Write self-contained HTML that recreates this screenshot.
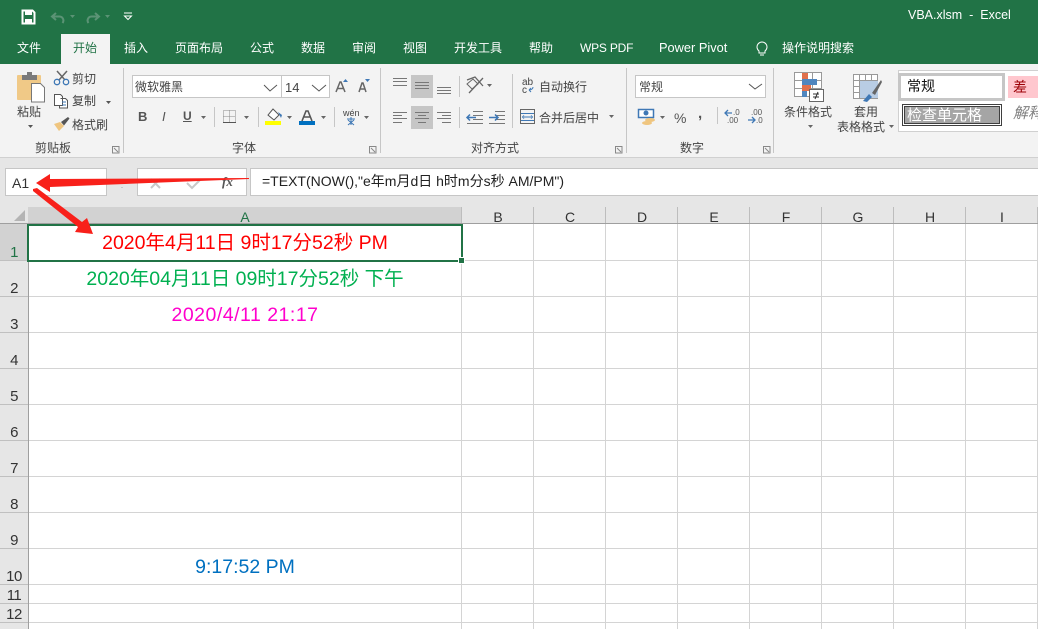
<!DOCTYPE html>
<html><head><meta charset="utf-8"><style>
html,body{margin:0;padding:0}
html{width:1038px;height:629px;overflow:hidden}
body{width:1038px;height:629px;overflow:hidden;position:relative;background:#fff;font-family:"Liberation Sans","Noto Sans CJK SC",sans-serif;font-size:12px;color:#333}
.a{position:absolute;white-space:nowrap;line-height:1}
.b{position:absolute}
svg{position:absolute;overflow:visible}
.t{color:#fff;font-size:12px;top:42px}
.c{font-size:12px;color:#444}
.r{left:0;width:28px;text-align:center;font-size:15px;letter-spacing:-.5px;color:#333}
.h{top:210px;font-size:14px;color:#333;text-align:center;width:72px}
.cell{left:29px;width:432px;text-align:center;font-size:19.5px}
</style></head><body>
<div class="b" style="left:0;top:0;width:1038px;height:64px;background:#217346"></div>
<div class="b" style="left:61px;top:34px;width:49px;height:30px;background:#f3f3f3"></div>
<svg style="left:0;top:0" width="200" height="34">
<path d="M22.500 10.500h10l2 2v11h-12z" fill="none" stroke="#fff" stroke-width="2"/><rect x="25" y="10" width="7" height="5" fill="#fff"/><rect x="25" y="19" width="7" height="5" fill="#fff"/>
<path d="M56 13l-4 3.500 4 3.500M52.500 16.500h7a4 4 0 0 1 3 6.500" fill="none" stroke="#5b9375" stroke-width="2"/><path d="M70 15h5l-2.500 3z" fill="#5b9375"/>
<path d="M95 13l4 3.500-4 3.500M98.500 16.500h-7a4 4 0 0 0-3 6.500" fill="none" stroke="#5b9375" stroke-width="2"/><path d="M105 15h5l-2.500 3z" fill="#5b9375"/>
<path d="M124 13h8" stroke="#fff"/><path d="M124.500 16h7l-3.500 3.500z" fill="none" stroke="#fff"/>
</svg>
<div class="a" style="left:908px;top:9px;color:#fff;font-size:12.500px">VBA.xlsm &nbsp;-&nbsp; Excel</div>
<div class="a t" style="left:17px">文件</div>
<div class="a t" style="left:73px;color:#217346">开始</div>
<div class="a t" style="left:124px">插入</div>
<div class="a t" style="left:175px">页面布局</div>
<div class="a t" style="left:250px">公式</div>
<div class="a t" style="left:301px">数据</div>
<div class="a t" style="left:352px">审阅</div>
<div class="a t" style="left:403px">视图</div>
<div class="a t" style="left:454px">开发工具</div>
<div class="a t" style="left:529px">帮助</div>
<div class="a t" style="left:580px;letter-spacing:-.2px">WPS PDF</div>
<div class="a t" style="left:659px;font-size:12.800px">Power Pivot</div>
<svg style="left:754px;top:40px" width="16" height="18"><path d="M5 11a5 5 0 1 1 6 0v2H5z" fill="none" stroke="#fff"/><path d="M6 15h4" stroke="#fff"/></svg>
<div class="a t" style="left:782px">操作说明搜索</div>

<div class="b" style="left:0;top:64px;width:1038px;height:93px;background:#f3f3f3;border-bottom:1px solid #d0d0d0"></div>
<div class="b" style="left:0;top:158px;width:1038px;height:49px;background:#e6e6e6"></div>
<div class="b" style="left:123px;top:68px;width:1px;height:85px;background:#c6c6c6"></div>
<div class="b" style="left:380px;top:68px;width:1px;height:85px;background:#c6c6c6"></div>
<div class="b" style="left:626px;top:68px;width:1px;height:85px;background:#c6c6c6"></div>
<div class="b" style="left:773px;top:68px;width:1px;height:85px;background:#c6c6c6"></div>

<!-- clipboard -->
<svg style="left:0;top:0" width="124" height="160">
<rect x="17" y="75" width="24" height="25" fill="#f0c987" rx="1"/><rect x="22" y="75" width="15" height="5" fill="#7a7a7a"/><rect x="27" y="72" width="5" height="4" fill="#7a7a7a"/>
<path d="M31.500 83.500h9l4 4v14.500h-13z" fill="#fff" stroke="#777"/>
<path d="M57 71l8 9M67 71l-8 9" stroke="#666" stroke-width="1.500"/><circle cx="57" cy="82" r="2.700" fill="none" stroke="#3f78b5" stroke-width="1.300"/><circle cx="66" cy="82" r="2.700" fill="none" stroke="#3f78b5" stroke-width="1.300"/>
<path d="M54.500 94.500h6l2 2v9h-8zM60.500 98.500h5l2 2v7.500h-8v-3" fill="#fff" stroke="#555"/><path d="M62 102h4M62 105h4" stroke="#3f78b5"/>
<path d="M54 124l6-2 4 4-5 5z" fill="#efc57f"/><path d="M61 122l7-5 1.500 1.500-5.500 7z" fill="#555"/>
<path d="M28 125h5l-2.500 3z" fill="#555"/><path d="M106 101h5l-2.500 3z" fill="#555"/>
<path d="M112.500 146.500h6.500v6.500h-6.500zM114 148l4 4" fill="none" stroke="#888"/>
</svg>
<div class="a c" style="left:17px;top:106px">粘贴</div>
<div class="a c" style="left:72px;top:73px">剪切</div>
<div class="a c" style="left:72px;top:95px">复制</div>
<div class="a c" style="left:72px;top:119px">格式刷</div>
<div class="a c" style="left:35px;top:142px">剪贴板</div>

<!-- font -->
<div class="b" style="left:132px;top:75px;width:148px;height:21px;background:#fff;border:1px solid #c6c6c6"></div>
<div class="b" style="left:281px;top:75px;width:47px;height:21px;background:#fff;border:1px solid #c6c6c6"></div>
<div class="a" style="left:135px;top:81px;font-size:12px;color:#444">微软雅黑</div>
<div class="a" style="left:285px;top:81px;font-size:13px;color:#444">14</div>
<svg style="left:128px;top:64px" width="255" height="90">
<path d="M136 21l6 6 7-6M184 21l7 6 7-6" fill="none" stroke="#555"/>
<path d="M208 28l4-10h1l4 10M209.500 24.500h6" fill="none" stroke="#666" stroke-width="1.500"/><path d="M215 18h5l-2.500-3z" fill="#3f78b5"/>
<path d="M231 28l3-9h1l3 9M232 25h5" fill="none" stroke="#666" stroke-width="1.500"/><path d="M237 15h5l-2.500 3z" fill="#3f78b5"/>
<path d="M73 52h5l-2.500 3zM116 52h5l-2.500 3zM159 52h5l-2.500 3zM193 52h5l-2.500 3zM236 52h5l-2.500 3z" fill="#666"/>
<path d="M86.500 43v20M130.500 43v20M206.500 43v20" stroke="#c6c6c6"/>
<path d="M95.500 46.500h12v12h-12zM101.500 46.500v12M95.500 52.500h12" fill="none" stroke="#888" stroke-dasharray="1 1"/><path d="M95 58.500h13" stroke="#555"/>
<rect x="137" y="57" width="16" height="4" fill="#ff0"/><path d="M145 45l6 6-5 5-6-5z" fill="#fff" stroke="#555"/><path d="M150 48l4 3-1 3z" fill="#3f78b5"/>
<rect x="171" y="57" width="16" height="4" fill="#0070c0"/><path d="M174 57l4-10h2l4 10M175.500 53h7" fill="none" stroke="#555" stroke-width="1.600"/>
<path d="M223 53v8M219 55h8M220 61l6-5M226 61l-6-5" stroke="#3f78b5" fill="none"/>
<path d="M241.500 82.500h6.500v6.500h-6.500zM243 84l4 4" fill="none" stroke="#888"/>
</svg>
<div class="a" style="left:138px;top:110px;font-weight:bold;font-size:13px;color:#555">B</div>
<div class="a" style="left:162px;top:110px;font-style:italic;font-size:13px;color:#555">I</div>
<div class="a" style="left:183px;top:110px;font-weight:bold;font-size:12px;color:#555;text-decoration:underline">U</div>
<div class="a" style="left:343px;top:109px;font-size:9px;color:#444">wén</div>
<div class="a c" style="left:232px;top:142px">字体</div>

<!-- align -->
<div class="b" style="left:411px;top:75px;width:22px;height:23px;background:#c6c6c6"></div>
<div class="b" style="left:411px;top:106px;width:22px;height:23px;background:#c6c6c6"></div>
<svg style="left:380px;top:60px" width="250" height="100">
<path d="M13 18.500h14M13 21.500h14M13 25.500h14M35 22.500h14M35 25.500h14M35 28.500h14M57 27.500h14M57 30.500h14M57 33.500h14" stroke="#777" fill="none"/>
<path d="M13 52.500h14M13 55.500h9M13 58.500h14M13 62.500h9M35 52.500h14M38 55.500h8M35 58.500h14M38 62.500h8M57 52.500h14M62 55.500h9M57 58.500h14M62 62.500h9" stroke="#777" fill="none"/>
<path d="M87 20l8-3 8 9M89 33l14-15" stroke="#666" fill="none" stroke-width="1.300"/><path d="M87 24l6-5 5 5-6 5z" fill="none" stroke="#666"/><path d="M107 24h5l-2.500 3z" fill="#666"/>
<path d="M79.500 16v21M79.500 47v21M132.500 14v54" stroke="#c6c6c6"/>
<path d="M93 51.500h10M93 55.500h10M93 59.500h10M87 63.500h16M115 51.500h10M115 55.500h10M115 59.500h10M109 63.500h16" stroke="#777" fill="none"/>
<path d="M87 57.500h9M90 54.500l-3 3 3 3" stroke="#3f78b5" stroke-width="1.500" fill="none"/><path d="M109 57.500h9M115 54.500l3 3-3 3" stroke="#3f78b5" stroke-width="1.500" fill="none"/>
<rect x="140.500" y="49.500" width="14" height="14" fill="none" stroke="#666"/>
<path d="M141 53.500h13M141 60.500h13M144 57h7M144 55.500l-1.500 1.500 1.500 1.500M151 55.500l1.500 1.500-1.500 1.500" stroke="#3f78b5" fill="none"/>
<path d="M229 55h5l-2.500 3z" fill="#666"/>
<path d="M149 30c2 0 4-1 4-3M149 30l2-2M149 30l2 2" stroke="#3f78b5" fill="none"/>
<path d="M235.500 86.500h6.500v6.500h-6.500zM237 88l4 4" fill="none" stroke="#888"/>
</svg>
<div class="a" style="left:522px;top:79px;font-size:10px;line-height:8px;color:#444;white-space:pre">ab
c</div>
<div class="a c" style="left:539px;top:81px">自动换行</div>
<div class="a c" style="left:539px;top:112px">合并后居中</div>
<div class="a c" style="left:471px;top:142px">对齐方式</div>

<!-- number -->
<div class="b" style="left:635px;top:75px;width:129px;height:21px;background:#fff;border:1px solid #c6c6c6"></div>
<div class="a" style="left:639px;top:81px;font-size:12px;color:#444">常规</div>
<svg style="left:626px;top:60px" width="150" height="100">
<path d="M123 24l6 5 7-5" fill="none" stroke="#555"/>
<rect x="12.500" y="49.500" width="15" height="8" fill="#fff" stroke="#3f78b5" stroke-width="1.500"/><circle cx="20" cy="53" r="2.500" fill="#3f78b5"/>
<ellipse cx="24" cy="60" rx="5" ry="2" fill="#efc57f"/><ellipse cx="21" cy="63" rx="5" ry="2" fill="#efc57f"/>
<path d="M34 56h5l-2.500 3z" fill="#666"/>
<path d="M91.500 47v17" stroke="#c6c6c6"/>
<path d="M99 53h7M102 50l-3 3 3 3M122 60h7M126 57l3 3-3 3" stroke="#3f78b5" fill="none" stroke-width="1.300"/>
<path d="M137.500 86.500h6.500v6.500h-6.500zM139 88l4 4" fill="none" stroke="#888"/>
</svg>
<div class="a" style="left:674px;top:111px;font-size:14px;color:#555">%</div>
<div class="a" style="left:698px;top:106px;font-size:15px;font-weight:bold;color:#555">,</div>
<div class="a" style="left:733px;top:109px;font-size:8px;color:#555">.0</div>
<div class="a" style="left:727px;top:117px;font-size:8px;color:#555">.00</div>
<div class="a" style="left:751px;top:109px;font-size:8px;color:#555">.00</div>
<div class="a" style="left:756px;top:117px;font-size:8px;color:#555">.0</div>
<div class="a c" style="left:680px;top:142px">数字</div>

<!-- styles -->
<svg style="left:770px;top:60px" width="130" height="90">
<path d="M24.500 12.500h27v24h-27zM33.500 12v24M42.500 12v24M24.500 20.500h27M24.500 28.500h27" fill="#fff" stroke="#999"/>
<rect x="32" y="13" width="6" height="6" fill="#e0704c"/><rect x="32" y="19" width="15" height="6" fill="#4f86bf"/><rect x="32" y="25" width="9" height="6" fill="#e0704c"/><rect x="32" y="31" width="5" height="6" fill="#4f86bf"/>
<rect x="39.500" y="29.500" width="14" height="12" fill="#fff" stroke="#666"/><path d="M43 34h6M43 37h6M48 32l-3 7" stroke="#333" fill="none"/>
<path d="M83.500 14.500h24v24h-24zM89.500 14v24M95.500 14v24M101.500 14v24M83.500 20.500h24M83.500 26.500h24M83.500 32.500h24" fill="#fff" stroke="#999"/>
<rect x="90" y="21" width="18" height="17" fill="#b9cde4"/>
<path d="M93 41l6-7 3 3-5 5z" fill="#3f78b5"/><path d="M102 33l9-13 1 2-7 13z" fill="#666"/>
</svg>
<div class="a c" style="left:784px;top:106px">条件格式</div>
<svg style="left:807px;top:124px" width="10" height="6"><path d="M1 1h5l-2.500 3z" fill="#666"/></svg>
<div class="a c" style="left:854px;top:106px">套用</div>
<div class="a c" style="left:837px;top:121px">表格格式</div>
<svg style="left:888px;top:124px" width="10" height="6"><path d="M1 1h5l-2.500 3z" fill="#666"/></svg>
<div class="b" style="left:898px;top:70px;width:140px;height:62px;background:#fff;border:1px solid #d0d0d0;border-right:0;box-sizing:border-box"></div>
<div class="b" style="left:898px;top:73px;width:107px;height:28px;box-sizing:border-box;background:#fff;border:3px solid #c6c6c6"></div>
<div class="a" style="left:907px;top:79px;font-size:14px;color:#111">常规</div>
<div class="b" style="left:1008px;top:76px;width:30px;height:22px;background:#ffc7ce"></div>
<div class="a" style="left:1013px;top:80px;font-size:14px;color:#9c0006">差</div>
<div class="b" style="left:902px;top:104px;width:100px;height:22px;box-sizing:border-box;background:#a5a5a5;border:1px solid #3f3f3f;box-shadow:inset 0 0 0 1px #fff,inset 0 0 0 2px #3f3f3f"></div>
<div class="a" style="left:907px;top:108px;font-size:15px;color:#fff">检查单元格</div>
<div class="a" style="left:1013px;top:106px;font-size:15px;color:#7f7f7f;font-style:italic">解释</div>

<!-- formula bar -->
<div class="b" style="left:5px;top:168px;width:100px;height:26px;background:#fff;border:1px solid #c6c6c6"></div>
<div class="a" style="left:12px;top:176px;font-size:14px;color:#333">A1</div>
<div class="b" style="left:137px;top:168px;width:108px;height:26px;background:#fff;border:1px solid #c6c6c6"></div>
<div class="b" style="left:250px;top:168px;width:788px;height:26px;background:#fff;border:1px solid #c6c6c6;border-right:0"></div>
<div class="a" style="left:262px;top:174px;font-size:14px;color:#222">=TEXT(NOW(),"e年m月d日 h时m分s秒 AM/PM")</div>
<div class="a" style="left:222px;top:175px;font-family:'Liberation Serif';font-style:italic;font-size:13px;color:#555;font-weight:bold">fx</div>
<svg style="left:0;top:150px" width="260" height="60"><path d="M151 29l9 9M160 29l-9 9M187 33l5 5 8-8" fill="none" stroke="#c8c8c8" stroke-width="2"/><path d="M122 32v1M122 37v1" stroke="#aaa"/></svg>

<!-- grid -->
<div class="b" style="left:0;top:207px;width:1038px;height:17px;background:#e6e6e6;border-bottom:1px solid #9f9f9f;box-sizing:border-box"></div>
<div class="b" style="left:28px;top:207px;width:434px;height:17px;background:#d2d2d2;border-bottom:1px solid #9f9f9f;box-sizing:border-box"></div>
<div class="b" style="left:0;top:224px;width:28px;height:405px;background:#e6e6e6;border-right:1px solid #9f9f9f"></div>
<div class="b" style="left:0;top:224px;width:28px;height:37px;background:#d2d2d2"></div>
<svg style="left:0;top:207px" width="30" height="17"><path d="M25 3v11H14z" fill="#b4b4b4"/></svg>
<svg style="left:0;top:207px" width="1038" height="422">
<g stroke="#d4d4d4" fill="none"><path d="M461.500 17V422M533.500 17V422M605.500 17V422M677.500 17V422M749.500 17V422M821.500 17V422M893.500 17V422M965.500 17V422M1037.500 17V422"/>
<path d="M29 53.500H1038M29 89.500H1038M29 125.500H1038M29 161.500H1038M29 197.500H1038M29 233.500H1038M29 269.500H1038M29 305.500H1038M29 341.500H1038M29 377.500H1038M29 396.500H1038M29 415.500H1038"/></g>
<path d="M0 53.500H28M0 89.500H28M0 125.500H28M0 161.500H28M0 197.500H28M0 233.500H28M0 269.500H28M0 305.500H28M0 341.500H28M0 377.500H28M0 396.500H28M0 415.500H28" stroke="#c0c0c0"/>
<path d="M461.500 0V16M533.500 0V16M605.500 0V16M677.500 0V16M749.500 0V16M821.500 0V16M893.500 0V16M965.500 0V16M1037.500 0V16" stroke="#bdbdbd"/>
</svg>
<div class="a" style="left:28px;top:210px;width:434px;text-align:center;font-size:14px;color:#217346">A</div>
<div class="a h" style="left:462px">B</div><div class="a h" style="left:534px">C</div><div class="a h" style="left:606px">D</div><div class="a h" style="left:678px">E</div><div class="a h" style="left:750px">F</div><div class="a h" style="left:822px">G</div><div class="a h" style="left:894px">H</div><div class="a h" style="left:966px">I</div>
<div class="a r" style="top:245px;color:#217346">1</div>
<div class="a r" style="top:281px">2</div><div class="a r" style="top:317px">3</div><div class="a r" style="top:353px">4</div><div class="a r" style="top:389px">5</div><div class="a r" style="top:425px">6</div><div class="a r" style="top:461px">7</div><div class="a r" style="top:497px">8</div><div class="a r" style="top:533px">9</div><div class="a r" style="top:569px">10</div><div class="a r" style="top:588px">11</div><div class="a r" style="top:607px">12</div><div class="a r" style="top:628px">13</div>

<div class="b" style="left:27px;top:224px;width:436px;height:38px;box-sizing:border-box;border:2px solid #217346"></div>
<div class="b" style="left:458px;top:257px;width:5px;height:5px;background:#217346;border:1px solid #fff"></div>

<div class="a cell" style="top:234px;color:#f00">2020年4月11日 9时17分52秒 PM</div>
<div class="a cell" style="top:270px;color:#00b050">2020年04月11日 09时17分52秒 下午</div>
<div class="a cell" style="top:306px;letter-spacing:.5px;color:#f0c">2020/4/11 21:17</div>
<div class="a cell" style="top:558px;color:#0070c0">9:17:52 PM</div>

<svg style="left:0;top:0" width="300" height="270">
<path d="M36 183L50 174 50 179 249 178 249 179 50 187 50 192z" fill="#f8201a"/>
<path d="M33 189L37 188 82 222 87 218 93 234 75 232 78 227 33 191z" fill="#f8201a"/>
</svg>
</body></html>
